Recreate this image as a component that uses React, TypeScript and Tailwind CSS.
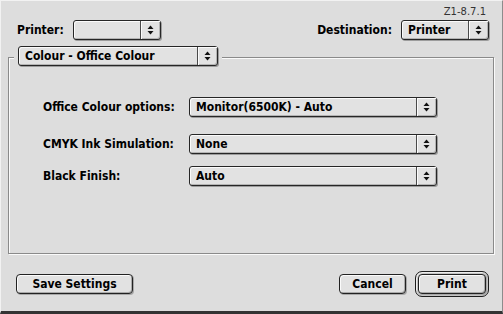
import React from "react";

// ─── Arrows ──────────────────────────────────────────────────────────────────

function Arrows() {
  return (
    <svg width="7" height="10" viewBox="0 0 7 10" className="shrink-0">
      <path d="M3.5 0.5L6.5 4H0.5z" fill="#111" />
      <path d="M0.5 6H6.5L3.5 9.5z" fill="#111" />
    </svg>
  );
}

// ─── Popup ───────────────────────────────────────────────────────────────────

function Popup({ value, className }: Readonly<{ value?: string; className: string }>) {
  return (
    <div
      className={`flex h-[20px] shrink-0 rounded-[3px] border border-[#262626] bg-[#e2e2e2] shadow-[1px_1px_0_#9c9c9c,inset_1px_1px_0_#fbfbfb,inset_-1px_-1px_0_#b4b4b4] ${className}`}
    >
      <div className="flex-1 flex items-center pl-[6px] text-[12px] font-bold leading-none whitespace-nowrap overflow-hidden">
        {value}
      </div>
      <div className="w-[20px] flex items-center justify-center border-l border-[#4a4a4a] shadow-[inset_1px_1px_0_#fbfbfb]">
        <Arrows />
      </div>
    </div>
  );
}

// ─── Button ──────────────────────────────────────────────────────────────────

function Button({ label, className }: Readonly<{ label: string; className: string }>) {
  return (
    <button
      type="button"
      className={`h-[20px] shrink-0 rounded-[4px] border border-[#222] bg-[#e2e2e2] text-[12px] font-bold leading-none shadow-[1px_1px_0_#a8a8a8,inset_1px_1px_0_#fbfbfb,inset_-1px_-1px_0_#aaaaaa] ${className}`}
    >
      {label}
    </button>
  );
}

// ─── Option row ──────────────────────────────────────────────────────────────

function OptionRow({ label, value, className }: Readonly<{ label: string; value: string; className: string }>) {
  return (
    <div className={`flex items-center h-[20px] pl-[34px] ${className}`}>
      <span className="w-[146px] text-[12px] font-bold whitespace-nowrap">{label}</span>
      <Popup value={value} className="w-[248px]" />
    </div>
  );
}

// ─── App ─────────────────────────────────────────────────────────────────────

export default function App() {
  return (
    <div className="w-[503px] h-[314px] flex flex-col bg-[#dddddd] text-black border-t border-l border-[#f2f2f2] border-r border-r-[#8c8c8c] border-b-[3px] border-b-[#333] font-['DejaVu_Sans_Condensed','DejaVu_Sans',sans-serif] select-none">
      {/* ── Version ── */}
      <div className="pt-[5px] h-[17px] pr-[16px] text-right text-[10px] leading-[12px] text-[#333] font-['DejaVu_Sans',sans-serif]">
        Z1-8.7.1
      </div>

      {/* ── Printer / Destination ── */}
      <div className="mt-[2px] h-[20px] flex items-center pl-[16px] pr-[13px]">
        <span className="w-[56px] text-[12px] font-bold">Printer:</span>
        <Popup className="w-[88px]" />
        <div className="flex-1" />
        <span className="mr-[9px] text-[12px] font-bold">Destination:</span>
        <Popup value="Printer" className="w-[88px]" />
      </div>

      {/* ── Group box ── */}
      <div className="mt-[17px] ml-[7px] w-[486px] h-[197px] flex flex-col border border-[#8a8a8a] shadow-[1px_1px_0_#fafafa,inset_1px_1px_0_#fafafa]">
        <div className="-mt-[12px] ml-[5px] self-start px-[4px] bg-[#dddddd]">
          <Popup value="Colour - Office Colour" className="w-[200px]" />
        </div>
        <OptionRow label="Office Colour options:" value="Monitor(6500K) - Auto" className="mt-[31px]" />
        <OptionRow label="CMYK Ink Simulation:" value="None" className="mt-[17px]" />
        <OptionRow label="Black Finish:" value="Auto" className="mt-[12px]" />
      </div>

      {/* ── Buttons ── */}
      <div className="mt-[17px] h-[26px] flex items-center pl-[15px] pr-[13px]">
        <Button label="Save Settings" className="w-[117px]" />
        <div className="flex-1" />
        <Button label="Cancel" className="w-[67px]" />
        <div className="ml-[9px] w-[74px] h-[26px] flex rounded-[7px] border border-[#1e1e1e] bg-[#c4c4c4] p-[2px] shadow-[inset_1px_1px_0_#eeeeee]">
          <Button label="Print" className="flex-1 !h-full" />
        </div>
      </div>
    </div>
  );
}
